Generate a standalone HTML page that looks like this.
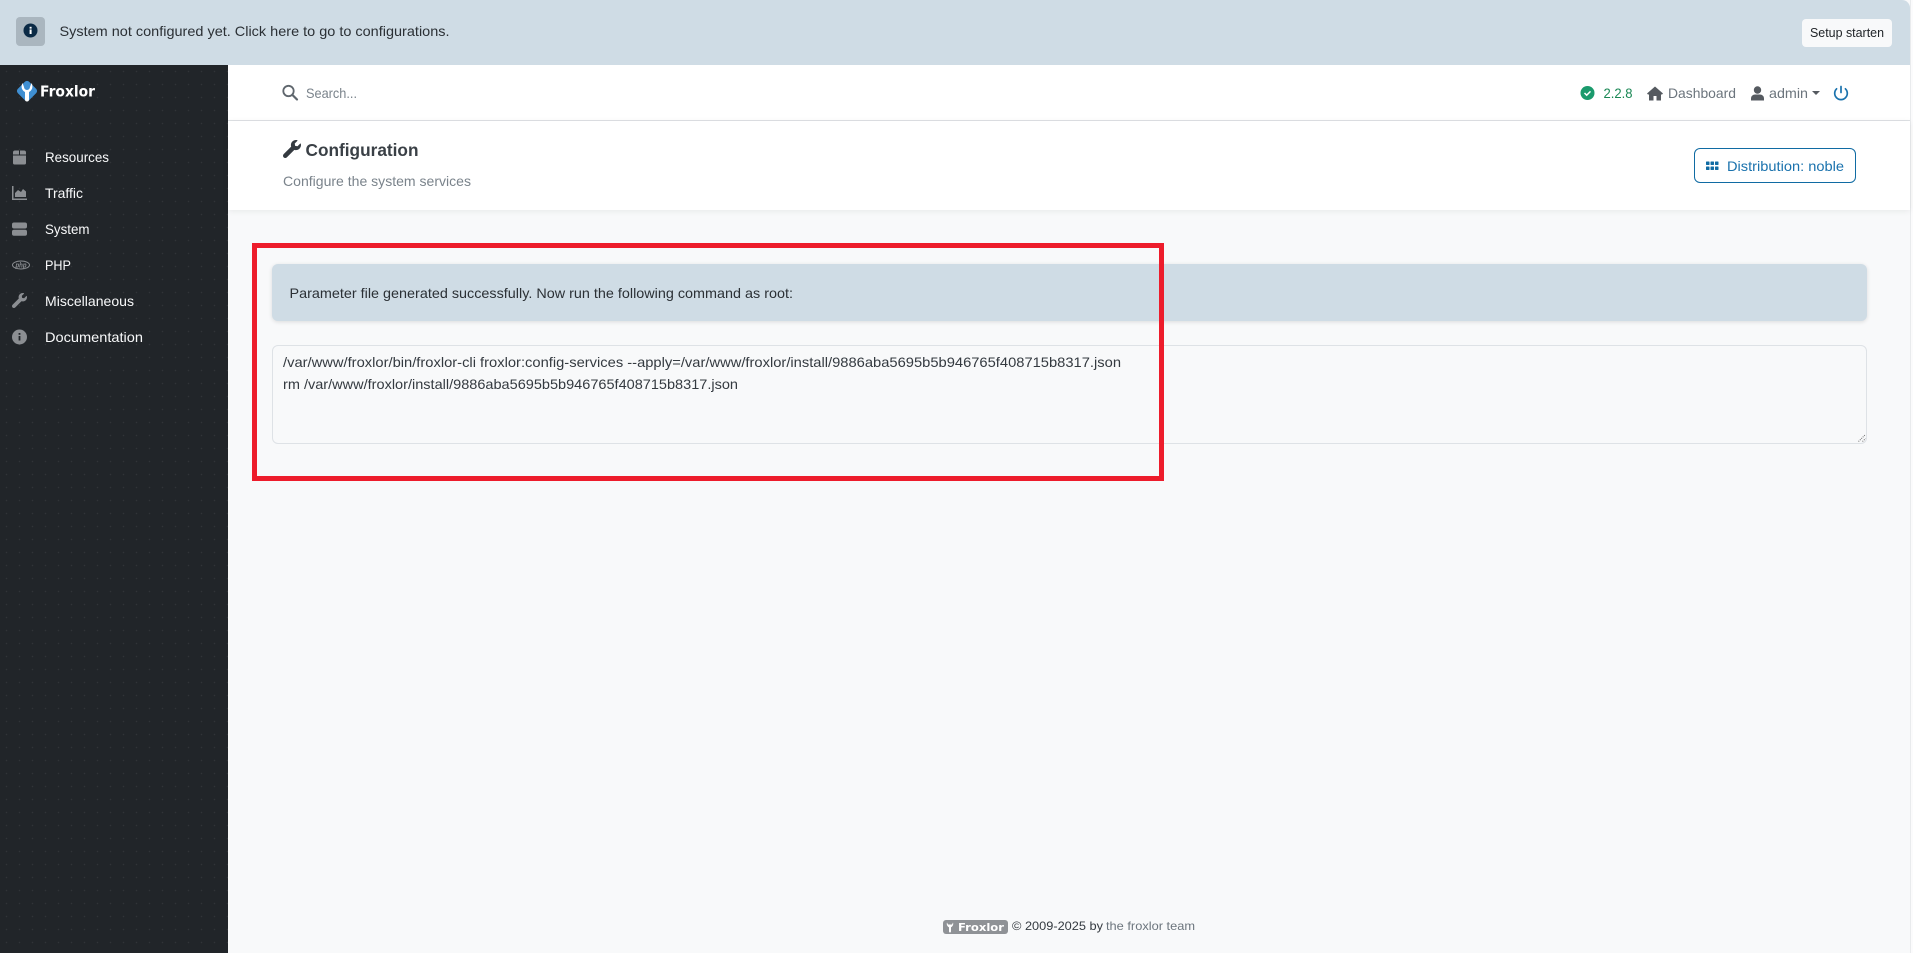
<!DOCTYPE html>
<html lang="en">
<head>
<meta charset="utf-8">
<title>Froxlor - Configuration</title>
<style>
html,body{margin:0;padding:0;width:1913px;height:953px;overflow:hidden;background:#fbfbfc;font-family:"Liberation Sans",sans-serif}
.b{position:absolute;box-sizing:border-box}
svg{position:absolute;left:0;top:0}
text{font-family:"Liberation Sans",sans-serif;font-size:14px}
</style>
</head>
<body>
<div class="b" style="left:0;top:0;width:1910px;height:953px;background:#f8f9fa"></div>
<div class="b" style="left:1910px;top:0;width:1px;height:953px;background:#e9ebed"></div>
<div class="b" style="left:0;top:0;width:1910px;height:65px;background:#cfdce5;border-top-right-radius:8px"></div>
<div class="b" style="left:16px;top:17px;width:29px;height:29px;background:#aab6bf;border-radius:4px"></div>
<div class="b" style="left:1802px;top:19px;width:90px;height:28px;background:#f8f9fa;border-radius:4px"></div>
<div class="b" style="left:0;top:65px;width:228px;height:888px;background-color:#212529;background-image:radial-gradient(rgba(255,255,255,.07) .6px,transparent .9px);background-size:13px 13px"></div>
<div class="b" style="left:228px;top:65px;width:1682px;height:56px;background:#fff;border-bottom:1px solid #dfe2e5"></div>
<div class="b" style="left:228px;top:121px;width:1682px;height:89px;background:#fff;box-shadow:0 1px 6px rgba(0,0,0,.07)"></div>
<div class="b" style="left:1694px;top:148px;width:162px;height:35px;border:1px solid #106ba3;border-radius:6px"></div>
<div class="b" style="left:272px;top:264px;width:1595px;height:57px;background:#cfdce5;border-radius:6px;box-shadow:0 1px 4px rgba(0,0,0,.12)"></div>
<div class="b" style="left:272px;top:345px;width:1595px;height:99px;border:1px solid #dee2e6;border-radius:6px"></div>
<div class="b" style="left:252px;top:243px;width:912px;height:238px;border:5px solid #ed1c2b"></div>
<div class="b" style="left:943px;top:920px;width:65px;height:14px;background:#8f9296;border-radius:3px"></div>

<svg width="1913" height="953" viewBox="0 0 1913 953" xmlns="http://www.w3.org/2000/svg">
<!-- top notice -->
<circle cx="30.500" cy="30.500" r="7" fill="#0b2a45"/>
<rect x="29.600" y="29.500" width="2" height="4.500" fill="#fff"/><rect x="29.600" y="26.800" width="2" height="1.800" fill="#fff"/>
<text x="59.500" y="36" textLength="390" lengthAdjust="spacingAndGlyphs" fill="#2b3035">System not configured yet. Click here to go to configurations.</text>
<text x="1810" y="37" textLength="74" lengthAdjust="spacingAndGlyphs" fill="#212529" style="font-size:13px">Setup starten</text>

<!-- logo -->
<rect x="19" y="83" width="16" height="16" rx="3" transform="rotate(45 27 91)" fill="#3f8fd2"/>
<path d="M22.500 83C20.500 87 22 90.500 25 92V99.500a2 2 0 0 0 4 0V92C32 90.500 33.500 87 31.500 83L30 87a3 3 0 0 1-6 0Z" fill="#fff"/>
<text x="40" y="96.500" textLength="55" lengthAdjust="spacingAndGlyphs" fill="#fff" style="font-family:'DejaVu Sans',sans-serif;font-size:15.500px;font-weight:bold">Froxlor</text>

<!-- sidebar icons -->
<g fill="#8b8e92">
<path d="M13 152.500a2 2 0 0 1 2-2h4v4h-6zM20 150.500h4a2 2 0 0 1 2 2v2h-6zM13 155.500h13v7.500a1.500 1.500 0 0 1-1.500 1.500h-10a1.500 1.500 0 0 1-1.500-1.500z"/>
<path d="M12 186h1.500v12.500H27V200H12z"/><path d="M15 197v-4l3-3 3 2 2-3 3 2.500V197z"/>
<rect x="12" y="222.500" width="15" height="6" rx="2"/><rect x="12" y="229.800" width="15" height="6" rx="2"/>
<svg x="12" y="293" width="15" height="15" viewBox="0 0 512 512"><path d="M507.730 109.100c-2.240-9.030-13.540-12.090-20.120-5.510l-74.360 74.360-67.880-11.310-11.310-67.880 74.360-74.360c6.620-6.620 3.430-17.900-5.660-20.160-47.380-11.740-99.550.91-136.580 37.930-39.640 39.640-50.550 97.100-34.050 147.200L18.740 402.760c-24.990 24.990-24.990 65.510 0 90.500 24.990 24.990 65.510 24.990 90.500 0l213.210-213.210c50.120 16.710 107.470 5.680 147.370-34.220 37.070-37.070 49.700-89.320 37.910-136.730z"/></svg>
<circle cx="19.500" cy="337" r="7.500"/>
</g>
<ellipse cx="21" cy="265" rx="8.500" ry="4" fill="none" stroke="#8b8e92" stroke-width="1"/>
<text x="15.500" y="267.500" textLength="11" lengthAdjust="spacingAndGlyphs" fill="#8b8e92" style="font-size:7px;font-style:italic;font-weight:bold">php</text>
<rect x="18.600" y="336" width="1.800" height="4.500" fill="#212529"/><rect x="18.600" y="333" width="1.800" height="1.800" fill="#212529"/>

<!-- sidebar labels -->
<g fill="#f8f9fa">
<text x="45" y="162" textLength="64" lengthAdjust="spacingAndGlyphs">Resources</text>
<text x="45" y="198" textLength="38" lengthAdjust="spacingAndGlyphs">Traffic</text>
<text x="45" y="234" textLength="44.500" lengthAdjust="spacingAndGlyphs">System</text>
<text x="45" y="270" textLength="26" lengthAdjust="spacingAndGlyphs">PHP</text>
<text x="45" y="306" textLength="89" lengthAdjust="spacingAndGlyphs">Miscellaneous</text>
<text x="45" y="342" textLength="98" lengthAdjust="spacingAndGlyphs">Documentation</text>
</g>

<!-- search bar -->
<circle cx="288.500" cy="91" r="5.200" fill="none" stroke="#5f666d" stroke-width="1.800"/>
<path d="M292.500 95l4.500 4.500" stroke="#5f666d" stroke-width="2.200" stroke-linecap="round"/>
<text x="306" y="98" textLength="51" lengthAdjust="spacingAndGlyphs" fill="#7a838b">Search...</text>

<circle cx="1587.500" cy="93" r="7" fill="#1a9a6c"/>
<path d="M1584.500 93l2.200 2.200 3.800-3.800" fill="none" stroke="#fff" stroke-width="1.500"/>
<text x="1603.500" y="98" textLength="29" lengthAdjust="spacingAndGlyphs" fill="#198754">2.2.8</text>

<path d="M1655 86.500l8 7-1.200 1.300-.8-.7v6.400h-4.500v-4.500h-3v4.500H1649v-6.400l-.8.7-1.200-1.300z" fill="#555a60"/>
<text x="1668" y="98" textLength="68" lengthAdjust="spacingAndGlyphs" fill="#6c757d">Dashboard</text>

<circle cx="1757.500" cy="90" r="3.700" fill="#555a60"/>
<path d="M1751 100.500v-2c0-2.500 2-4 4-4h5c2 0 4 1.500 4 4v2z" fill="#555a60"/>
<text x="1769" y="98" textLength="39" lengthAdjust="spacingAndGlyphs" fill="#6c757d">admin</text>
<path d="M1812 91h8l-4 4z" fill="#555a60"/>

<path d="M1836.600 88.800a6.300 6.300 0 1 0 8.800 0" fill="none" stroke="#1a72ad" stroke-width="1.700" stroke-linecap="round"/>
<path d="M1841 86.500v6" stroke="#1a72ad" stroke-width="1.700" stroke-linecap="round"/>

<!-- page header -->
<svg x="283" y="140" width="18" height="18" viewBox="0 0 512 512" fill="#343a40"><path d="M507.730 109.100c-2.240-9.030-13.540-12.090-20.120-5.510l-74.360 74.360-67.880-11.310-11.310-67.880 74.360-74.360c6.620-6.620 3.430-17.900-5.660-20.160-47.380-11.740-99.550.91-136.580 37.930-39.640 39.640-50.550 97.100-34.050 147.200L18.740 402.760c-24.990 24.990-24.990 65.510 0 90.500 24.990 24.990 65.510 24.990 90.500 0l213.210-213.210c50.120 16.710 107.470 5.680 147.370-34.220 37.070-37.070 49.700-89.320 37.910-136.730z"/></svg>
<text x="305.500" y="156" textLength="113" lengthAdjust="spacingAndGlyphs" fill="#3a4046" style="font-size:17.500px;font-weight:bold">Configuration</text>
<text x="283" y="186" textLength="188" lengthAdjust="spacingAndGlyphs" fill="#7a838b">Configure the system services</text>

<g fill="#106ba3">
<rect x="1706" y="161.500" width="3.500" height="3.500" rx=".6"/><rect x="1710.500" y="161.500" width="3.500" height="3.500" rx=".6"/><rect x="1715" y="161.500" width="3.500" height="3.500" rx=".6"/>
<rect x="1706" y="166.500" width="3.500" height="3.500" rx=".6"/><rect x="1710.500" y="166.500" width="3.500" height="3.500" rx=".6"/><rect x="1715" y="166.500" width="3.500" height="3.500" rx=".6"/>
</g>
<text x="1727" y="171" textLength="117" lengthAdjust="spacingAndGlyphs" fill="#1a72ad">Distribution: noble</text>

<!-- content -->
<text x="289.500" y="298" textLength="503.500" lengthAdjust="spacingAndGlyphs" fill="#2b3035">Parameter file generated successfully. Now run the following command as root:</text>
<text x="283" y="367" textLength="838" lengthAdjust="spacingAndGlyphs" fill="#343a40">/var/www/froxlor/bin/froxlor-cli froxlor:config-services --apply=/var/www/froxlor/install/9886aba5695b5b946765f408715b8317.json</text>
<text x="283" y="389" textLength="455" lengthAdjust="spacingAndGlyphs" fill="#343a40">rm /var/www/froxlor/install/9886aba5695b5b946765f408715b8317.json</text>
<path d="M1858.500 441.500l7-7M1862.500 441.500l3-3" stroke="#6e6e6e" stroke-width="1" stroke-dasharray="1 1"/>

<!-- footer -->
<path d="M947 922.500c-.7 2.200.4 4 2 4.800v4.200a1 1 0 0 0 2 0v-4.200c1.600-.8 2.700-2.600 2-4.800l-1 2h-4z" fill="#fff"/>
<text x="958" y="931" textLength="46" lengthAdjust="spacingAndGlyphs" fill="#fff" style="font-family:'DejaVu Sans',sans-serif;font-size:10.500px;font-weight:bold">Froxlor</text>
<text x="1012" y="930" textLength="91" lengthAdjust="spacingAndGlyphs" fill="#343a40" style="font-size:12px">© 2009-2025 by</text>
<text x="1106" y="930" textLength="89" lengthAdjust="spacingAndGlyphs" fill="#6c757d" style="font-size:12px">the froxlor team</text>
</svg>
</body>
</html>
